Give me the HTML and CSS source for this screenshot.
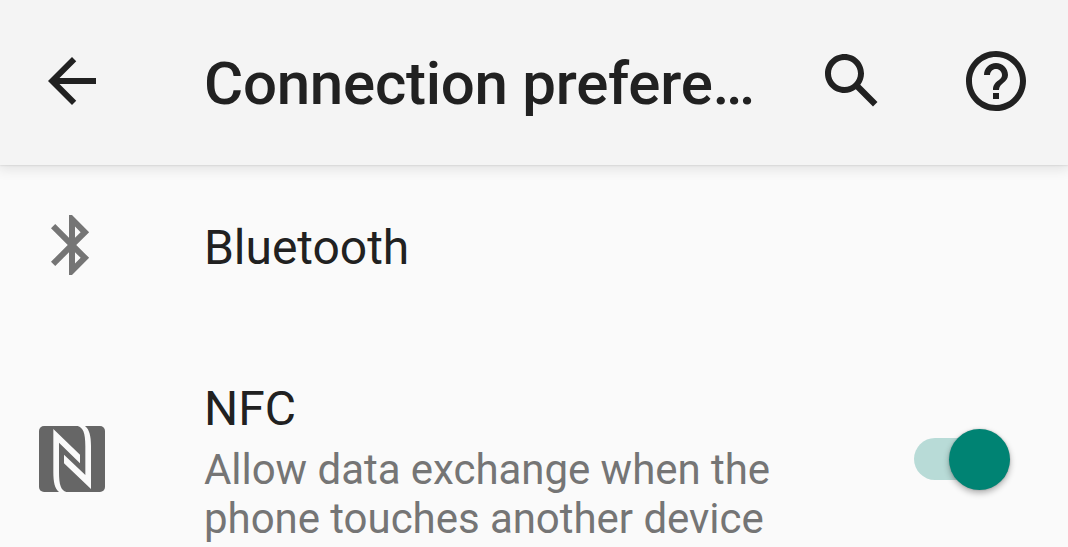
FILE: index.html
```html
<!DOCTYPE html>
<html lang="en">
<head>
    <meta charset="UTF-8">
    <meta name="viewport" content="width=device-width, initial-scale=1.0">
    <title>Connection preferences</title>
    <link rel="stylesheet" href="styles.css">
</head>
<body>
    <header class="toolbar">
        <svg class="icon" viewBox="0 0 24 24"><path d="M20 11H7.83l5.59-5.59L12 4l-8 8 8 8 1.41-1.41L7.83 13H20v-2z"/></svg>
        <h1 class="toolbar-title">Connection prefere…</h1>
        <div class="toolbar-actions">
            <svg class="icon" viewBox="0 0 24 24"><path d="M20.49 19l-5.73-5.73C15.53 12.2 16 10.91 16 9.5 16 5.91 13.09 3 9.5 3S3 5.91 3 9.5 5.91 16 9.5 16c1.41 0 2.7-.47 3.77-1.24L19 20.49 20.49 19zM5 9.5C5 7.01 7.01 5 9.5 5S14 7.01 14 9.5 11.99 14 9.5 14 5 11.99 5 9.5z"/></svg>
            <svg class="icon" viewBox="0 0 24 24"><path d="M11 18h2v-2h-2v2zm1-16C6.48 2 2 6.48 2 12s4.48 10 10 10 10-4.48 10-10S17.52 2 12 2zm0 18c-4.41 0-8-3.59-8-8s3.59-8 8-8 8 3.59 8 8-3.59 8-8 8zm0-14c-2.21 0-4 1.79-4 4h2c0-1.1.9-2 2-2s2 .9 2 2c0 2-3 1.75-3 5h2c0-2.25 3-2.5 3-5 0-2.21-1.79-4-4-4z"/></svg>
        </div>
    </header>

    <main class="settings">
        <div class="row">
            <div class="row-icon">
                <svg class="icon" viewBox="0 0 24 24"><path d="M17.71 7.71L12 2h-1v7.59L6.41 5 5 6.41 10.59 12 5 17.59 6.41 19 11 14.41V22h1l5.71-5.71-4.3-4.29 4.3-4.29zM13 5.83l1.88 1.88L13 9.59V5.83zm1.88 10.46L13 18.17v-3.76l1.88 1.88z"/></svg>
            </div>
            <div class="row-text">
                <div class="row-title">Bluetooth</div>
            </div>
        </div>

        <div class="row row-nfc">
            <div class="row-icon">
                <svg class="nfc-icon" viewBox="0 0 198 198">
                    <rect class="nfc-box" width="198" height="198" rx="15"/>
                    <path class="nfc-mark" d="M43 9L123 86V112L60 50V138C60 178 66 193 82 198H60C47 188 43 168 43 138Z"/>
                    <path class="nfc-mark" d="M156 189L75 112V86L139 147V60C139 20 132 5 116 0H138C151 10 156 30 156 60Z"/>
                </svg>
            </div>
            <div class="row-text">
                <div class="row-title">NFC</div>
                <div class="row-summary">Allow data exchange when the phone touches another device</div>
            </div>
            <div class="switch"><div class="switch-thumb"></div></div>
        </div>
    </main>
</body>
</html>
```
FILE: styles.css
```css
body {
    margin: 0;
    background-color: #fafafa;
    color: #212121;
    font-family: Roboto, sans-serif;
    overflow: hidden;
}

.toolbar {
    display: flex;
    align-items: center;
    box-sizing: border-box;
    height: 165px;
    padding: 0 36px 3px;
    background-color: #f4f4f4;
    box-shadow: 0 0 2px rgba(0, 0, 0, 0.18), 0 2px 12px 2px rgba(0, 0, 0, 0.1);
}

.icon {
    display: block;
    flex: none;
    width: 72px;
    height: 72px;
    fill: #212121;
}

.toolbar-title {
    width: 572px;
    margin: 0 0 0 96px;
    padding-top: 5px;
    font-size: 60px;
    font-weight: 500;
    line-height: 76px;
    letter-spacing: -0.25px;
    white-space: nowrap;
}

.toolbar-actions {
    display: flex;
    gap: 72px;
    margin-left: auto;
}

.row {
    display: flex;
    align-items: center;
    box-sizing: border-box;
    height: 160px;
    padding: 0 58px 0 36px;
}

.row-nfc {
    height: 222px;
    padding-top: 46px;
}

.row-icon {
    display: flex;
    justify-content: center;
    width: 72px;
    margin-right: 96px;
}

.row-icon .icon {
    fill: #757575;
}

.nfc-icon {
    width: 66px;
    height: 66px;
}

.nfc-box {
    fill: #666;
}

.nfc-mark {
    fill: #fafafa;
}

.row-text {
    width: 600px;
    padding-top: 5px;
}

.row-title {
    font-size: 48px;
    line-height: 56px;
    letter-spacing: -0.05px;
}

.row-summary {
    margin-top: 8px;
    color: #757575;
    font-size: 42px;
    line-height: 49px;
    letter-spacing: -0.04px;
}

.switch {
    display: flex;
    align-items: center;
    justify-content: flex-end;
    width: 96px;
    height: 42px;
    margin-left: auto;
    border-radius: 21px;
    background-color: #b8dbd7;
}

.switch-thumb {
    width: 61px;
    height: 61px;
    flex: none;
    border-radius: 50%;
    background-color: #008373;
    box-shadow: 0 0 2px rgba(0, 0, 0, 0.2), 0 3px 6px rgba(0, 0, 0, 0.3);
}
```
